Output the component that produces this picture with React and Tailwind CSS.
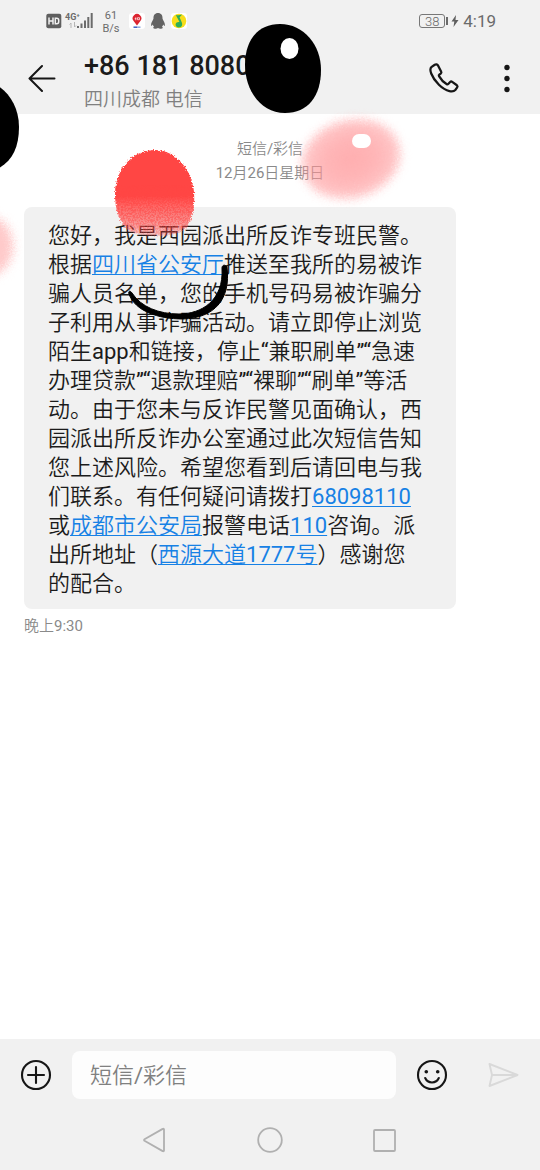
import React from 'react';

function StatusBar() {
  return (
    <div className="flex h-[42px] items-center pl-[46px] pr-11 text-[#6b6b6b]">
      <svg className="h-4 w-4" viewBox="0 0 16 16" aria-label="HD">
        <rect x="0.3" y="0.8" width="15" height="14.4" rx="2" fill="#5f5f5f" />
        <path d="M3 4.6v6.8M7 4.6v6.8M3 8h4M9.3 5.2v5.6h1.4a2 2 0 0 0 2-2V7.200a2 2 0 0 0-2-2z" fill="none" stroke="#f1f1f1" strokeWidth="1.5" />
      </svg>
      <div className="ml-[3px] flex h-4 w-7 items-end">
        <div className="flex h-full w-3 flex-col">
          <span className="whitespace-nowrap text-[9px] font-bold leading-[9px]">4G⁺</span>
          <svg className="ml-1 h-[6px] w-2" viewBox="0 0 8 6" fill="none" stroke="#b5b5b5">
            <path d="M2 6V1M0.500 2.500 2 1M5.500 0v5M7 3.500 5.500 5" />
          </svg>
        </div>
        <svg className="h-4 w-4" viewBox="0 0 16 16" fill="#6b6b6b">
          <rect x="0" y="13" width="2" height="2" />
          <rect x="3.500" y="10.500" width="2" height="4.500" />
          <rect x="7" y="7.500" width="2" height="7.500" />
          <rect x="10.300" y="4" width="2" height="11" />
          <rect x="13.700" y="0" width="2" height="15" />
        </svg>
      </div>
      <div className="ml-2 w-5 pt-[2px] text-center text-[11px] leading-[13px]">
        <div>61</div>
        <div>B/s</div>
      </div>
      <svg className="ml-2 h-4 w-4" viewBox="0 0 16 16">
        <rect width="16" height="16" rx="3" fill="#fff" />
        <path d="M8 12.500 L4.800 8.200a4.300 4.300 0 1 1 6.400 0z" fill="#dc2430" />
        <path d="M5.700 5.700h1.600M6.800 4.300v3M8.500 4.700h2v2h-2z" stroke="#fff" strokeWidth="0.700" fill="none" />
        <path d="M4.500 14.200H8" stroke="#3b5fc4" strokeWidth="1.500" />
        <path d="M8 14.200h3.500" stroke="#8ea8dd" strokeWidth="1.500" />
      </svg>
      <svg className="ml-[5px] h-4 w-4" viewBox="0 0 16 16" fill="#636363">
        <path d="M8 0C4.900 0 3.300 2.300 3.500 5.300c0 .8-.4 1-.6 1.800-.9 1.500-1.900 3.300-1.800 5.200.1 1.200.9.600 1.700-.7.200.9.600 1.600 1.200 2.200-1.300.7-.9 2 1 2 1.300 0 2.400-.3 3-.7.600.4 1.700.7 3 .7 1.900 0 2.300-1.300 1-2 .6-.6 1-1.300 1.200-2.200.8 1.300 1.600 1.900 1.700.7.100-1.900-.9-3.700-1.800-5.200-.2-.8-.6-1-.6-1.800C12.700 2.300 11.100 0 8 0z" />
      </svg>
      <svg className="ml-[5px] h-4 w-4" viewBox="0 0 16 16">
        <rect width="16" height="16" rx="3" fill="#fff" />
        <circle cx="8" cy="8" r="7.300" fill="#f7dd19" />
        <path d="M4.800 1.900c2 .7 4 .5 6.300-.4-.8 1.200-1.800 2-2.500 2.700l2.300 5.600c1 3-.8 4.700-2.900 4.700-2.300 0-3.600-1.600-3.400-3.200.3-1.800 2-2.500 3.900-2.200z" fill="#2cae59" />
      </svg>
      <div className="ml-auto flex items-center">
        <div className="flex h-[14px] w-[26px] items-center justify-center rounded-[3px] border border-[#777] text-[13px] font-light leading-none">38</div>
        <div className="ml-px h-2 w-[2px] bg-[#6b6b6b]" />
        <svg className="ml-[3px] h-3 w-2" viewBox="0 0 8 12" fill="#5f5f5f">
          <path d="M5 0 0.500 6.600h2.800L2.500 12 7.500 5H4.500z" />
        </svg>
        <span className="ml-1 text-[17px] leading-none">4:19</span>
      </div>
    </div>
  );
}

function Header() {
  return (
    <header className="flex h-[72px] items-center pl-7 pr-[21px]">
      <button type="button" aria-label="返回" className="h-7 w-7">
        <svg viewBox="0 0 28 28" fill="none" stroke="#161616" strokeWidth="2" strokeLinecap="round" strokeLinejoin="round">
          <path d="M14 2 1.500 14.500 14 27M1.500 14.500H26.500" />
        </svg>
      </button>
      <div className="ml-7 flex-1 self-end">
        <h1 className="text-[27px] font-medium leading-8 text-[#1b1b1b]">+86 181 8080</h1>
        <p className="mt-1 text-[19px] leading-7 text-[#808080]">四川成都 电信</p>
      </div>
      <button type="button" aria-label="拨打电话" className="h-8 w-8">
        <svg viewBox="-1 -1 34 34" fill="none" stroke="#161616" strokeWidth="2.400" strokeLinejoin="round">
          <path d="M6.200 1.900 2.900 4.200C1.400 5.400 1.300 8.300 2.400 11.200c1.500 4 4.600 8.300 8.200 11.900 3.600 3.500 7.800 6 11.200 6.800 2.600.6 4.900.3 6.200-1.200l2-2.700c.5-.7.400-1.700-.3-2.300l-5-3.600c-.7-.5-1.600-.4-2.200.200l-2 2.100c-.4.4-1 .5-1.500.2-3.300-2-6.500-5.300-8.300-8.600-.3-.5-.2-1.100.3-1.500l1.500-1.200c.7-.6.900-1.500.4-2.300L9.500 2.500c-.6-1-2.200-1.300-3.300-.6z" />
        </svg>
      </button>
      <button type="button" aria-label="更多" className="ml-[35px] flex h-8 w-6 items-center justify-center">
        <svg className="h-8 w-6" viewBox="0 0 24 32" fill="#161616">
          <circle cx="12" cy="5.500" r="2.700" />
          <circle cx="12" cy="16.500" r="2.700" />
          <circle cx="12" cy="27.500" r="2.700" />
        </svg>
      </button>
    </header>
  );
}

function MessageLink({ children }) {
  return (
    <a href="#" className="text-[#1781e5] underline decoration-1 underline-offset-2">
      {children}
    </a>
  );
}

function Message() {
  return (
    <div className="mx-6 mt-[22px]">
      <div className="w-[432px] max-w-full rounded-lg bg-[#f1f1f1] px-6 pb-[11px] pt-[14px]">
        <p className="whitespace-nowrap text-[22px] leading-[29px] text-[#1b1b1b]">
          您好，我是西园派出所反诈专班民警。<br />
          根据<MessageLink>四川省公安厅</MessageLink>推送至我所的易被诈<br />
          骗人员名单，您的手机号码易被诈骗分<br />
          子利用从事诈骗活动。请立即停止浏览<br />
          陌生app和链接，停止“兼职刷单”“急速<br />
          办理贷款”“退款理赔”“裸聊”“刷单”等活<br />
          动。由于您未与反诈民警见面确认，西<br />
          园派出所反诈办公室通过此次短信告知<br />
          您上述风险。希望您看到后请回电与我<br />
          们联系。有任何疑问请拨打<MessageLink>68098110</MessageLink><br />
          或<MessageLink>成都市公安局</MessageLink>报警电话<MessageLink>110</MessageLink>咨询。派<br />
          出所地址（<MessageLink>西源大道1777号</MessageLink>）感谢您<br />
          的配合。
        </p>
      </div>
      <p className="mt-[6px] text-[15px] leading-[22px] text-[#8a8a8a]">晚上9:30</p>
    </div>
  );
}

function Composer() {
  return (
    <div className="flex h-[73px] items-center px-5 pb-px">
      <button type="button" aria-label="添加" className="h-8 w-8">
        <svg viewBox="0 0 32 32" fill="none" stroke="#161616" strokeWidth="2.100" strokeLinecap="round">
          <circle cx="16" cy="16" r="14" />
          <path d="M8 16h16M16 8v16" />
        </svg>
      </button>
      <input
        type="text"
        aria-label="短信/彩信"
        placeholder="短信/彩信"
        className="ml-5 h-12 min-w-0 flex-1 rounded-lg bg-[#fdfdfd] px-[18px] text-[22px] text-[#1b1b1b] outline-none placeholder:text-[#808080]"
      />
      <button type="button" aria-label="表情" className="ml-5 h-8 w-8">
        <svg viewBox="0 0 32 32" fill="none" stroke="#161616" strokeWidth="2.100" strokeLinecap="round">
          <circle cx="16" cy="16" r="14" />
          <circle cx="10.300" cy="12.700" r="1.800" fill="#161616" stroke="none" />
          <circle cx="21.700" cy="12.700" r="1.800" fill="#161616" stroke="none" />
          <path d="M9.200 19c2.600 5.900 11 5.900 13.600 0" />
        </svg>
      </button>
      <button type="button" aria-label="发送" className="ml-10 h-8 w-8">
        <svg viewBox="0 0 32 32" fill="none" stroke="#d9d9d9" strokeWidth="1.900" strokeLinejoin="round">
          <path d="M1.500 5 29.500 16 1.500 27 4 16zM4 16h25" />
        </svg>
      </button>
    </div>
  );
}

function NavBar() {
  return (
    <nav className="flex h-[58px] items-center justify-center gap-[88px] pb-[2px]">
      <button type="button" aria-label="返回" className="h-7 w-7">
        <svg viewBox="0 0 28 28" fill="none" stroke="#b0b0b0" strokeWidth="1.800" strokeLinejoin="round">
          <path d="M24 3.500v21c0 .8-.7 1-1.300.600L4.500 14.800c-.6-.4-.6-1.200 0-1.600L22.700 2.900c.6-.4 1.300-.2 1.300.6z" />
        </svg>
      </button>
      <button type="button" aria-label="主页" className="h-7 w-7">
        <svg viewBox="0 0 28 28" fill="none" stroke="#b0b0b0" strokeWidth="1.800">
          <circle cx="14" cy="14" r="11.800" />
        </svg>
      </button>
      <button type="button" aria-label="最近任务" className="h-7 w-7">
        <svg viewBox="0 0 28 28" fill="none" stroke="#b0b0b0" strokeWidth="1.800">
          <rect x="2" y="4" width="21" height="21" rx="1" />
        </svg>
      </button>
    </nav>
  );
}

// Doodle face painted over the conversation
function Doodle() {
  return (
    <svg className="pointer-events-none absolute left-0 top-0" width="540" height="340" viewBox="0 0 540 340">
      <defs>
        <filter id="soft" x="-20%" y="-20%" width="140%" height="140%" colorInterpolationFilters="sRGB">
          <feGaussianBlur stdDeviation="5" result="b" />
          <feTurbulence type="fractalNoise" baseFrequency="0.7" numOctaves="2" seed="5" result="n" />
          <feDisplacementMap in="b" in2="n" scale="8" xChannelSelector="R" yChannelSelector="G" />
        </filter>
        <filter id="grain" x="-10%" y="-10%" width="120%" height="120%" colorInterpolationFilters="sRGB">
          <feTurbulence type="fractalNoise" baseFrequency="0.8" numOctaves="2" seed="3" result="n" />
          <feDisplacementMap in="SourceGraphic" in2="n" scale="5" xChannelSelector="R" yChannelSelector="G" />
        </filter>
        {/* fine red dots over the lower half of the nose */}
        <filter id="speckle" x="-10%" y="-10%" width="120%" height="120%" colorInterpolationFilters="sRGB">
          <feTurbulence type="fractalNoise" baseFrequency="0.6" numOctaves="2" seed="8" />
          <feColorMatrix values="0 0 0 0 1  0 0 0 0 0.275  0 0 0 0 0.267  5 0 0 0 -2" result="dots" />
          <feComposite in="dots" in2="SourceGraphic" operator="in" />
        </filter>
        <linearGradient id="nose" x1="0" y1="0" x2="0" y2="1">
          <stop offset="0" stopColor="#ff4644" />
          <stop offset="0.54" stopColor="#ff4644" />
          <stop offset="0.68" stopColor="#ff4644" stopOpacity="0.78" />
          <stop offset="0.85" stopColor="#ff4644" stopOpacity="0.55" />
          <stop offset="1" stopColor="#ff4644" stopOpacity="0.2" />
        </linearGradient>
        <linearGradient id="noseDots" x1="0" y1="0" x2="0" y2="1">
          <stop offset="0.4" stopColor="#ff4644" stopOpacity="0" />
          <stop offset="0.6" stopColor="#ff4644" stopOpacity="0.6" />
          <stop offset="0.8" stopColor="#ff4644" stopOpacity="0.5" />
          <stop offset="1" stopColor="#ff4644" stopOpacity="0.2" />
        </linearGradient>
        <radialGradient id="cheek">
          <stop offset="0" stopColor="#ff9496" stopOpacity="0.76" />
          <stop offset="0.55" stopColor="#ff9496" stopOpacity="0.68" />
          <stop offset="1" stopColor="#ff9496" stopOpacity="0.5" />
        </radialGradient>
      </defs>
      <ellipse cx="-12" cy="246" rx="25" ry="30" fill="#ffcaca" filter="url(#soft)" />
      <ellipse cx="351" cy="159" rx="50" ry="39" fill="url(#cheek)" filter="url(#soft)" transform="rotate(-16 351 159)" />
      <rect x="352" y="134" width="19" height="14" rx="7" fill="#fff" />
      <path d="M155 150c21 0 37 20 39 42 1 14-1 27-8 36-6 6-17 8-29 8-14 0-27-2-33-10-6-8-9-19-9-32 0-24 17-44 40-44z" fill="url(#nose)" filter="url(#grain)" />
      <path d="M155 151c21 0 36 20 38 42 1 14-1 26-8 34-6 7-17 9-28 9-14 0-27-3-32-10-6-8-9-19-9-32 0-24 16-43 39-43z" fill="url(#noseDots)" filter="url(#speckle)" />
      <path d="M-30 82C-8 74 19 95 19 127c0 22-8 36-24 43z" fill="#000" />
      <path d="M280 24c24 0 41 21 41 46 0 26-13 43-36 43-25 0-40-24-40-48 0-25 13-41 35-41z" fill="#000" />
      <ellipse cx="289.500" cy="48.500" rx="9" ry="10.500" fill="#fff" />
      <path d="M132 293c9 14 27 21 47 21 22 0 45-13 43-46 0-3 3-4 5-1 4 33-13 51-44 52-25 0-48-8-54-25-1-3 1-4 3-1z" fill="#000" stroke="#000" strokeWidth="1" strokeLinejoin="round" />
    </svg>
  );
}

function App() {
  return (
    <div className="relative flex min-h-screen flex-col overflow-hidden bg-white font-[Roboto,'Noto_Sans_CJK_SC_DemiLight','Noto_Sans_CJK_SC',sans-serif]">
      <div className="bg-[#f1f1f1]">
        <StatusBar />
        <Header />
      </div>
      <main className="flex-1">
        <div className="mt-[23px] text-center text-[15px] leading-6 text-[#8a8a8a]">
          <p>短信/彩信</p>
          <p>12月26日星期日</p>
        </div>
        <Message />
      </main>
      <footer className="bg-[#f1f1f1]">
        <Composer />
        <NavBar />
      </footer>
      <Doodle />
    </div>
  );
}

export default App;
